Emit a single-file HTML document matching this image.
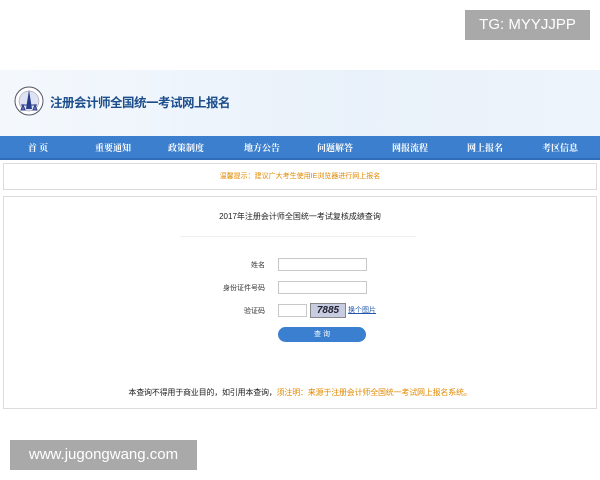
<!DOCTYPE html>
<html><head><meta charset="utf-8"><style>
body{margin:0;width:600px;height:480px;background:#fff;position:relative;overflow:hidden;font-family:"Liberation Sans","Noto Sans CJK SC",sans-serif}
.abs{position:absolute}
.banner{left:0;top:70px;width:600px;height:66px;background:linear-gradient(90deg,#f4f8fd,#e9f1fa 60%,#eef4fb)}
.nav{left:0;top:136px;width:600px;height:22px;background:#3b7fce;border-bottom:2px solid #2f6db8}
.nav span{position:absolute;top:5px;font-size:9px;color:#fff;font-weight:bold;font-family:"Noto Serif CJK SC",serif;transform:translateX(-50%);white-space:nowrap}
.box{border:1px solid #dcdcdc;background:#fff}
.lbl{font-size:7px;color:#333;text-align:right;width:80px}
.inp{border:1px solid #c8c8c8;background:#fff;height:11px}
</style></head><body>
<div class="abs" style="left:465px;top:10px;width:125px;height:30px;background:#a9a9a9;color:#fff;font-size:15px;line-height:30px;text-align:center">TG: MYYJJPP</div>
<div class="abs banner"></div>
<svg class="abs" style="left:13px;top:85px" width="32" height="32" viewBox="0 0 32 32"><circle cx="16" cy="16" r="14" fill="#fff" stroke="#556" stroke-width="1"/><circle cx="16" cy="16" r="10" fill="#dde3f2" stroke="#889" stroke-width=".5"/><path d="M16 5 L13 24 L19 24Z" fill="#2a3d8a"/><path d="M8 20 L24 20 M10 20 L8 25 L12 25Z M22 20 L20 25 L24 25Z" stroke="#2a3d8a" fill="#6a7ac0" stroke-width="1"/></svg>
<div class="abs" style="left:50px;top:92px;font-size:12.5px;font-weight:bold;color:#1d4e8c;letter-spacing:-.5px">注册会计师全国统一考试网上报名</div>
<div class="abs nav">
<span style="left:38px">首 页</span><span style="left:113px">重要通知</span><span style="left:186px">政策制度</span><span style="left:262px">地方公告</span><span style="left:335px">问题解答</span><span style="left:410px">网报流程</span><span style="left:485px">网上报名</span><span style="left:560px">考区信息</span></div>
<div class="abs box" style="left:3px;top:163px;width:592px;height:25px"><div style="text-align:center;font-size:7px;color:#e08a00;line-height:25px">温馨提示：建议广大考生使用IE浏览器进行网上报名</div></div>
<div class="abs box" style="left:3px;top:196px;width:592px;height:211px"></div>
<div class="abs" style="left:0;top:211px;width:600px;text-align:center;font-size:8px;color:#222">2017年注册会计师全国统一考试复核成绩查询</div>
<div class="abs" style="left:180px;top:236px;width:236px;height:1px;background:#eee"></div>
<div class="abs lbl" style="left:185px;top:260px">姓名</div><div class="abs inp" style="left:278px;top:258px;width:87px"></div>
<div class="abs lbl" style="left:185px;top:283px">身份证件号码</div><div class="abs inp" style="left:278px;top:281px;width:87px"></div>
<div class="abs lbl" style="left:185px;top:306px">验证码</div><div class="abs inp" style="left:278px;top:304px;width:27px"></div>
<div class="abs" style="left:310px;top:303px;width:34px;height:13px;background:#c8cce0;border:1px solid #888;font-size:10px;line-height:13px;color:#223;font-weight:bold;text-align:center;font-style:italic">7885</div>
<div class="abs" style="left:348px;top:305px;font-size:7px;color:#2255aa;text-decoration:underline">换个图片</div>
<div class="abs" style="left:278px;top:327px;width:88px;height:15px;border-radius:8px;background:#3a7fd0;color:#fff;font-size:7px;line-height:15px;text-align:center">查 询</div>
<div class="abs" style="left:0;top:387px;width:600px;text-align:center;font-size:8px;color:#222;letter-spacing:-.2px">本查询不得用于商业目的，如引用本查询，<span style="color:#e08a00">须注明：来源于注册会计师全国统一考试网上报名系统。</span></div>
<div class="abs" style="left:10px;top:440px;width:187px;height:30px;background:#a9a9a9;color:#fff;font-size:15px;line-height:30px;text-align:center">www.jugongwang.com</div>
</body></html>
